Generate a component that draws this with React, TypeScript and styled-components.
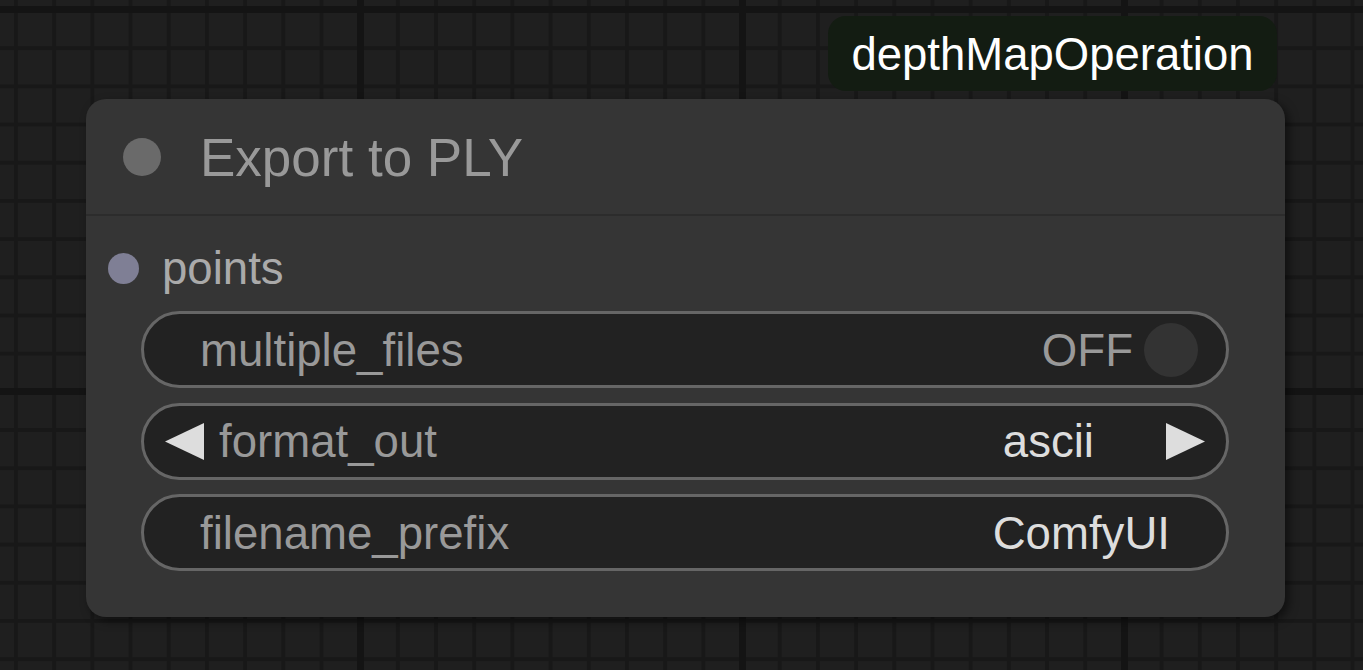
import React from "react";
import styled, { createGlobalStyle } from "styled-components";

const GlobalStyle = createGlobalStyle`
  html, body {
    margin: 0;
    padding: 0;
    width: 100%;
    height: 100%;
    overflow: hidden;
  }
  body {
    font-family: "Liberation Sans", Arial, sans-serif;
  }
`;

const Canvas = styled.div`
  position: relative;
  width: 1363px;
  height: 670px;
  overflow: hidden;
  background-color: #1f1f1f;
  background-image:
    linear-gradient(to right, #141414 7px, transparent 7px),
    linear-gradient(to bottom, #141414 7px, transparent 7px),
    linear-gradient(to right, #181818 4px, transparent 4px),
    linear-gradient(to bottom, #181818 4px, transparent 4px);
  background-size: 382px 100%, 100% 382px, 38.2px 100%, 100% 38.2px;
  background-position: 357px 0, 0 388px, 14px 0, 0 8px;
`;

const Badge = styled.div`
  position: absolute;
  left: 828px;
  top: 16px;
  width: 449px;
  height: 75px;
  box-sizing: border-box;
  border-radius: 18px;
  background: #131c12;
  color: #ffffff;
  font-size: 45.5px;
  display: flex;
  align-items: center;
  justify-content: center;
  padding-top: 2px;
  white-space: nowrap;
`;

const Node = styled.div`
  position: absolute;
  left: 86px;
  top: 99px;
  width: 1199px;
  height: 518px;
  box-sizing: border-box;
  border-radius: 20px;
  background: #353535;
  box-shadow: 4px 4px 10px rgba(0, 0, 0, 0.5);
  display: flex;
  flex-direction: column;
`;

const TitleBar = styled.div`
  height: 117px;
  flex: none;
  display: flex;
  align-items: center;
  gap: 39px;
  padding-left: 37px;
  padding-top: 1px;
  box-sizing: border-box;
  border-bottom: 2px solid #2c2c2c;
`;

const TitleDot = styled.div`
  width: 38px;
  height: 38px;
  border-radius: 50%;
  background: #6a6a6a;
`;

const TitleText = styled.div`
  font-size: 53px;
  line-height: 1;
  color: #999999;
`;

const Body = styled.div`
  display: flex;
  flex-direction: column;
  padding: 14px 56px 0 55px;
`;

const SlotRow = styled.div`
  height: 76px;
  flex: none;
  margin-left: -55px;
  display: flex;
  align-items: center;
  gap: 23px;
  padding-left: 22px;
  margin-bottom: 5px;
`;

const SlotDot = styled.div<{ $color: string }>`
  width: 31px;
  height: 31px;
  border-radius: 50%;
  background: ${(p) => p.$color};
`;

const SlotLabel = styled.div`
  font-size: 45.6px;
  line-height: 1;
  color: #aaaaaa;
  padding-top: 2px;
`;

const Widgets = styled.div`
  display: flex;
  flex-direction: column;
  gap: 14.5px;
`;

const Widget = styled.div<{ $pad: number }>`
  height: 77px;
  flex: none;
  box-sizing: border-box;
  border: 3px solid #666666;
  border-radius: 39px;
  background: #222222;
  display: flex;
  align-items: center;
  padding: 0 ${(p) => p.$pad}px;
  font-size: 45.6px;
  line-height: 1;
`;

const Label = styled.span`
  color: #999999;
  flex: 1;
  padding-top: 2px;
  white-space: nowrap;
`;

const Value = styled.span<{ $dim?: boolean }>`
  color: ${(p) => (p.$dim ? "#999999" : "#dddddd")};
  padding-top: 2px;
  white-space: nowrap;
`;

const Knob = styled.div`
  width: 54px;
  height: 54px;
  border-radius: 50%;
  background: #333333;
  margin-left: 11px;
`;

const Arrow = styled.svg`
  width: 39px;
  height: 37px;
  flex: none;
`;

const LeftArrow = () => (
  <Arrow viewBox="0 0 39 37">
    <polygon points="39,0 39,37 0,18.5" fill="#dddddd" />
  </Arrow>
);

const RightArrow = () => (
  <Arrow viewBox="0 0 39 37">
    <polygon points="0,0 0,37 39,18.5" fill="#dddddd" />
  </Arrow>
);

const ComboLabel = styled(Label)`
  margin-left: 15px;
`;

const ComboValue = styled(Value)`
  margin-right: 72px;
`;

export default function App() {
  return (
    <>
      <GlobalStyle />
      <Canvas>
        <Node>
          <TitleBar>
            <TitleDot />
            <TitleText>Export to PLY</TitleText>
          </TitleBar>
          <Body>
            <SlotRow>
              <SlotDot $color="#7f7f95" />
              <SlotLabel>points</SlotLabel>
            </SlotRow>
            <Widgets>
              <Widget $pad={56} style={{ paddingRight: 28 }}>
                <Label>multiple_files</Label>
                <Value $dim>OFF</Value>
                <Knob />
              </Widget>
              <Widget $pad={21}>
                <LeftArrow />
                <ComboLabel>format_out</ComboLabel>
                <ComboValue>ascii</ComboValue>
                <RightArrow />
              </Widget>
              <Widget $pad={56}>
                <Label>filename_prefix</Label>
                <Value>ComfyUI</Value>
              </Widget>
            </Widgets>
          </Body>
        </Node>
        <Badge>depthMapOperation</Badge>
      </Canvas>
    </>
  );
}
